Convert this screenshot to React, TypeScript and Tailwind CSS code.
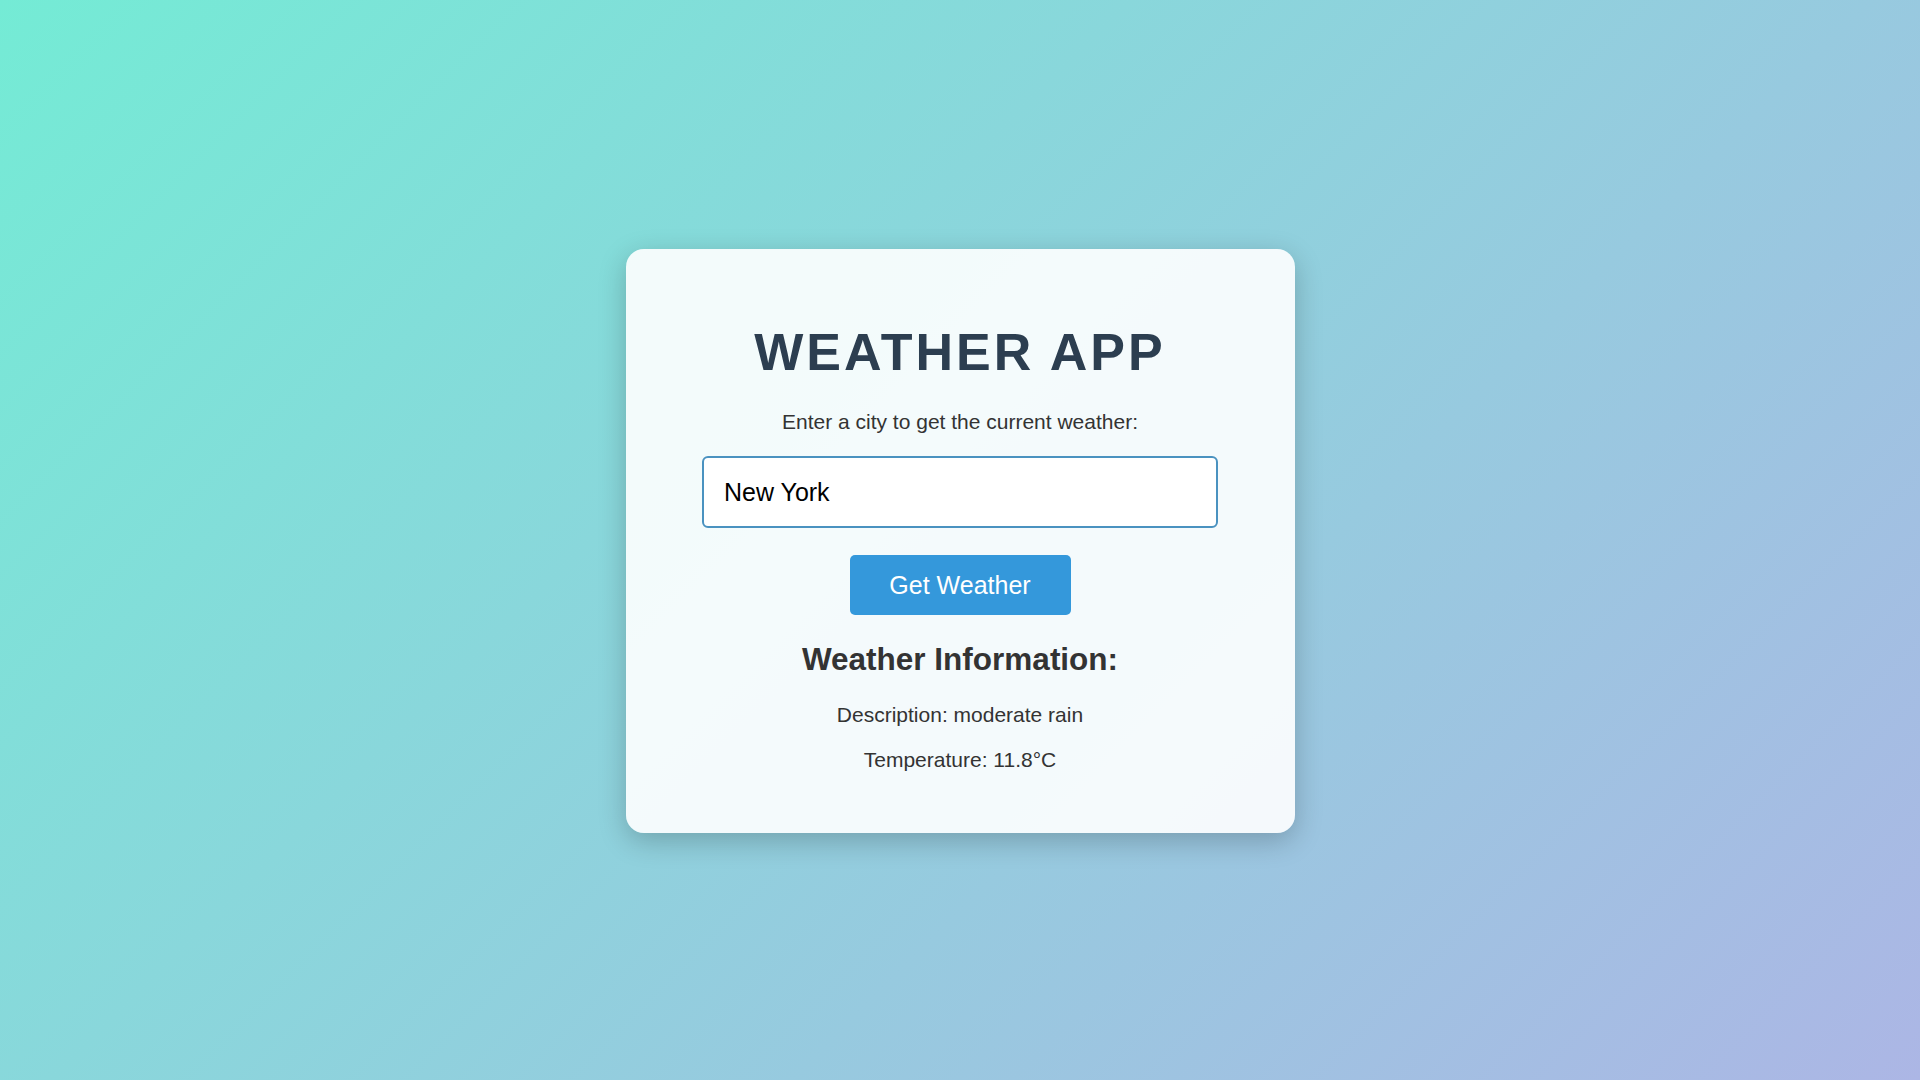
import React, { useState } from 'react';

const App: React.FC = () => {
  const [city, setCity] = useState('New York');
  const [weather] = useState({ description: 'moderate rain', temp: 11.8 });

  return (
    <div
      className="min-h-screen w-full flex items-start justify-center bg-[linear-gradient(135deg,#74ebd5,#acb6e5)]"
      style={{ fontFamily: '"Liberation Sans", Arial, sans-serif' }}
    >
      {/* Card */}
      <div className="mt-[249px] w-[669px] h-[584px] rounded-[18px] bg-white/90 shadow-[0_8px_28px_rgba(0,0,0,0.22)] flex flex-col items-center pt-[73px]">
        <h1 className="text-[52px] leading-[60px] font-bold tracking-[3px] text-[#2c3e50]">WEATHER APP</h1>

        <p className="mt-[28px] text-[21px] leading-[24px] text-[#333]">Enter a city to get the current weather:</p>

        <input
          value={city}
          onChange={(e) => setCity(e.target.value)}
          className="mt-[22px] w-[516px] h-[72px] px-[20px] text-[25px] text-black bg-white border-2 border-[#4a92c0] rounded-[6px] outline-none"
        />

        <button className="mt-[27px] w-[221px] h-[60px] rounded-[5px] bg-[#3498db] text-white text-[25px] leading-[28px]">
          Get Weather
        </button>

        <h2 className="mt-[26px] text-[31.5px] leading-[36px] font-bold text-[#333]">Weather Information:</h2>
        <p className="mt-[26px] text-[21px] leading-[24px] text-[#333]">Description: {weather.description}</p>
        <p className="mt-[21px] text-[21px] leading-[24px] text-[#333]">Temperature: {weather.temp}°C</p>
      </div>
    </div>
  );
};

export default App;
